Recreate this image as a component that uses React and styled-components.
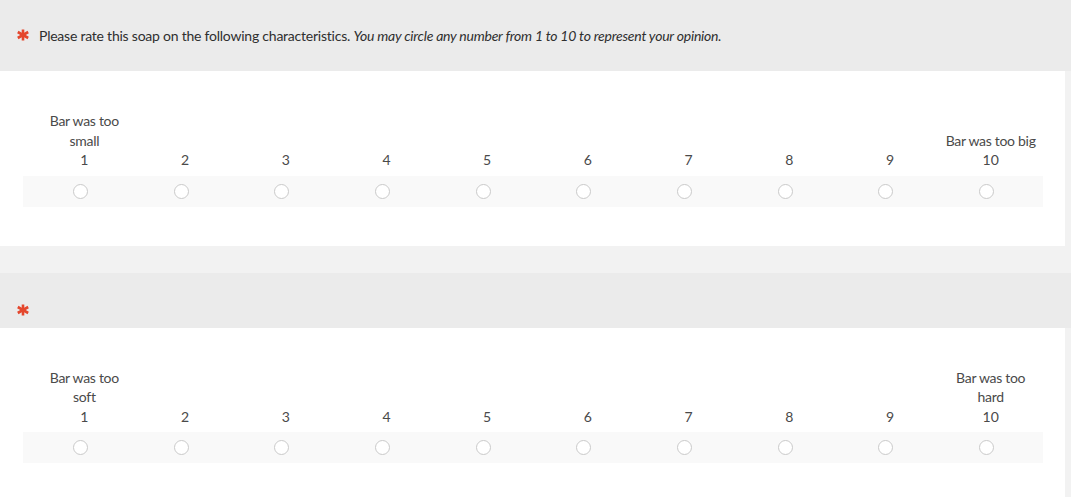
import styled, { createGlobalStyle } from "styled-components";

const GlobalStyle = createGlobalStyle`
  html, body {
    margin: 0;
    padding: 0;
    background: #f2f2f2;
    font-family: Lato, "Open Sans", sans-serif;
    color: #3c3c3c;
  }
`;

const questions = [
  {
    id: 1,
    text: "Please rate this soap on the following characteristics.",
    note: "You may circle any number from 1 to 10 to represent your opinion.",
    low: "Bar was too small",
    high: "Bar was too big",
    headPad: "26px 0 25px 17px",
  },
  {
    id: 2,
    low: "Bar was too soft",
    high: "Bar was too hard",
    headPad: "28px 0 12px 17px",
  },
];

const steps = [1, 2, 3, 4, 5, 6, 7, 8, 9, 10];

function Star() {
  return (
    <StarIcon viewBox="0 0 12 12">
      <g stroke="#e4472d" strokeWidth="2.6" strokeLinecap="butt">
        <line x1="6" y1="0.5" x2="6" y2="11.5" />
        <line x1="0.8" y1="3" x2="11.2" y2="9" />
        <line x1="0.8" y1="9" x2="11.2" y2="3" />
      </g>
    </StarIcon>
  );
}

export default function App() {
  return (
    <>
      <GlobalStyle />
      <Page>
        {questions.map((q) => (
          <Question key={q.id}>
            <Header $pad={q.headPad}>
              <Star />
              {q.text && (
                <Prompt>
                  {q.text} <em>{q.note}</em>
                </Prompt>
              )}
            </Header>
            <Body>
              <Scale>
                {steps.map((n) => (
                  <Cell key={n}>
                    {n === 1 && <Label>{q.low}</Label>}
                    {n === 10 && <Label>{q.high}</Label>}
                    <Num>{n}</Num>
                  </Cell>
                ))}
              </Scale>
              <Choices>
                {steps.map((n) => (
                  <Slot key={n}>
                    <Radio />
                  </Slot>
                ))}
              </Choices>
            </Body>
          </Question>
        ))}
      </Page>
    </>
  );
}

const Page = styled.div`
  display: flex;
  flex-direction: column;
  gap: 27px;
  width: 1071px;
  height: 497px;
  overflow: hidden;
`;

const Question = styled.section`
  display: flex;
  flex-direction: column;
`;

const Header = styled.div`
  display: flex;
  align-items: flex-start;
  gap: 10px;
  padding: ${(p) => p.$pad};
  background: #ebebeb;
`;

const StarIcon = styled.svg`
  width: 12px;
  height: 12px;
  margin-top: 3px;
  flex-shrink: 0;
`;

const Prompt = styled.p`
  margin: 0;
  font-size: 14px;
  line-height: 20px;
  letter-spacing: -0.23px;
  color: #2f2f2f;

  em {
    font-style: italic;
  }
`;

const Body = styled.div`
  width: 1065px;
  background: #fff;
  padding: 40px 0 39px 0;
`;

const Scale = styled.div`
  display: grid;
  grid-template-columns: repeat(10, 1fr);
  align-items: end;
  margin: 0 24px 0 34px;
`;

const Cell = styled.div`
  display: flex;
  flex-direction: column;
  align-items: center;
  text-align: center;
  font-size: 14px;
  line-height: 19.5px;
  color: #4a4a4a;
`;

const Label = styled.div`
  max-width: 92px;
  letter-spacing: -0.3px;
`;

const Num = styled.div``;

const Choices = styled.div`
  display: grid;
  grid-template-columns: repeat(10, 1fr);
  margin: 6px 22px 0 23px;
  padding: 0 2px 0 11px;
  height: 31px;
  background: #f9f9f9;
`;

const Slot = styled.div`
  display: flex;
  align-items: center;
  justify-content: center;
  padding-right: 8px;
`;

const Radio = styled.span`
  box-sizing: border-box;
  width: 15px;
  height: 15px;
  border-radius: 50%;
  border: 1.5px solid #cacaca;
  background: #fff;
`;
